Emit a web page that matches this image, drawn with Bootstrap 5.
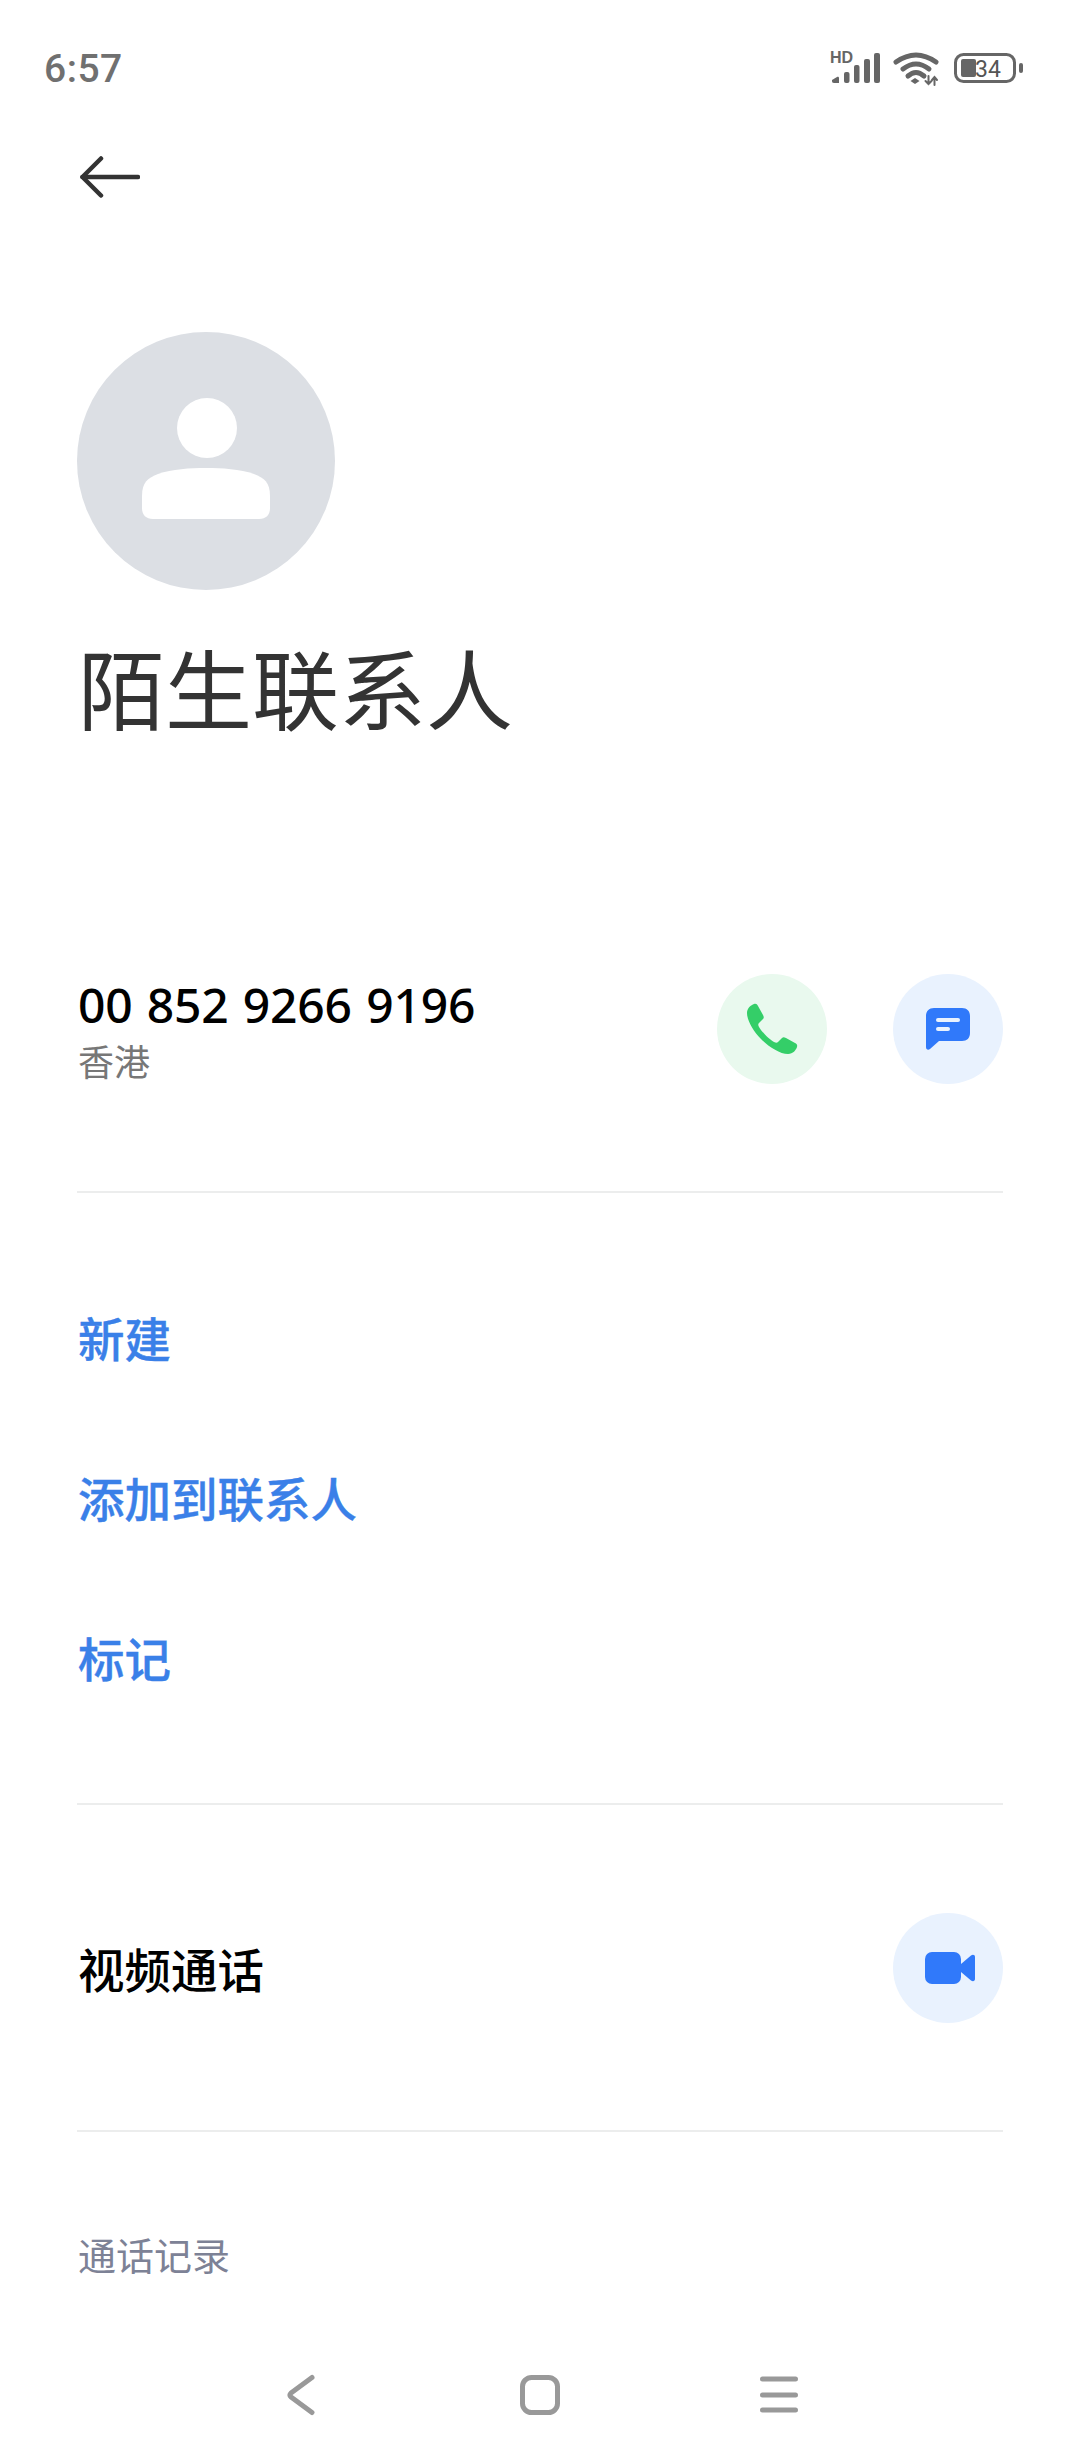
<!DOCTYPE html>
<html lang="zh-CN">

<head>
    <meta charset="UTF-8">
    <meta name="viewport" content="width=device-width, initial-scale=1.0">
    <link rel="stylesheet" href="https://cdn.jsdelivr.net/npm/bootstrap@5.3.1/dist/css/bootstrap.min.css">
    <title>陌生联系人</title>
    <style>
        body {
            width: 1080px;
            height: 2460px;
            overflow: hidden;
            background: #fff;
            font-family: "Noto Sans CJK SC", "Noto Sans", sans-serif;
        }

        svg {
            display: block;
        }

        .status-strip {
            height: 136px;
            padding: 48px 56px 0 44px;
        }

        .clock {
            margin-top: 5px;
            font-family: "Roboto", sans-serif;
            font-size: 39px;
            line-height: 32px;
            font-weight: 500;
            letter-spacing: 0.5px;
            color: #707070;
        }

        .status-icons {
            gap: 13px;
        }

        .back-row {
            height: 196px;
            padding: 20px 0 0 80px;
        }

        .avatar-disc {
            width: 258px;
            height: 258px;
            margin-left: 77px;
            padding-bottom: 6px;
            background: #dcdfe4;
        }

        .contact-title {
            margin: 46px 0 0 78px;
            font-size: 87px;
            line-height: 100px;
            font-weight: 400;
            color: #333;
        }

        .section-box {
            margin: 0 77px;
            border-bottom: 2px solid #eceded;
        }

        .number-box {
            height: 457px;
            padding: 238px 0 0 1px;
        }

        .phone-number {
            margin-top: 2px;
            font-family: "Noto Sans", sans-serif;
            font-size: 48px;
            line-height: 58px;
            font-weight: 500;
            letter-spacing: -0.2px;
            word-spacing: 2px;
            color: #000;
        }

        .phone-area {
            margin-top: 1px;
            font-size: 36px;
            line-height: 50px;
            color: #777;
        }

        .round-btn {
            width: 110px;
            height: 110px;
        }

        .round-green {
            background: #e9f9ee;
        }

        .round-blue {
            background: #e9f2fe;
        }

        .number-actions {
            gap: 66px;
        }

        .actions-box {
            height: 612px;
            padding: 92px 0 0 1px;
        }

        .action-link {
            height: 160px;
            font-size: 46.500px;
            line-height: 104px;
            font-weight: 500;
            -webkit-text-stroke: 0.4px #3a80e8;
            color: #3a80e8;
            text-decoration: none;
        }

        .video-box {
            height: 327px;
            padding-left: 1px;
        }

        .video-label {
            font-size: 46.500px;
            font-weight: 500;
            color: #000;
        }

        .video-glyph {
            margin-left: 4px;
        }

        .history-title {
            margin: 94px 0 0 78px;
            font-size: 38px;
            line-height: 56px;
            color: #7d8296;
        }

        .bottom-nav {
            height: 110px;
            padding-left: 286px;
            gap: 197px;
        }
    </style>
</head>

<body class="d-flex flex-column">
    <div class="status-strip d-flex justify-content-between align-items-start flex-shrink-0">
        <div class="clock">6:57</div>
        <div class="status-icons d-flex align-items-start">
            <svg width="50" height="38" viewBox="0 0 50 38" fill="#666">
                <text x="0" y="15" font-family="Liberation Sans, sans-serif" font-size="16" font-weight="700">HD</text>
                <path d="M2 32 L7 29 C8 28.500 9 29 9 30 V35 H4 C2.500 35 2 34 2 33 Z" />
                <rect x="14" y="24" width="5.500" height="11" rx="2" />
                <rect x="24" y="17" width="5.500" height="18" rx="2" />
                <rect x="34" y="11" width="6" height="24" rx="2" />
                <rect x="44" y="5" width="6" height="30" rx="2" />
            </svg>
            <svg width="48" height="38" viewBox="0 0 48 38" fill="none" stroke="#666" stroke-width="5" stroke-linecap="round">
                <path d="M3 14 Q23 0 43 14" />
                <path d="M10 21 Q23 11 36 21" />
                <path d="M15 28 Q23 21 31 28" />
                <path d="M17.500 33 L22 30 L26.500 33 L22 36 Z" fill="#666" stroke="none" />
                <path d="M35.500 28 V36 M32.500 33 L35.500 36 L38.500 33" stroke-width="2" />
                <path d="M41.500 37 V29 M39 32 L41.500 29 L44 32" stroke-width="2" />
            </svg>
            <svg width="70" height="38" viewBox="0 0 70 38">
                <rect x="1.500" y="6.500" width="59" height="27" rx="8" fill="none" stroke="#666" stroke-width="3" />
                <rect x="7" y="11" width="15" height="18" rx="2" fill="#666" />
                <text x="21" y="29" font-family="Roboto, sans-serif" font-size="23" fill="#555">34</text>
                <rect x="65" y="15" width="4" height="10" rx="2" fill="#666" />
            </svg>
        </div>
    </div>

    <div class="back-row flex-shrink-0">
        <svg width="60" height="42" viewBox="0 0 60 42" fill="none" stroke="#333" stroke-width="4.500" stroke-linecap="round" stroke-linejoin="round">
            <path d="M21 2.500 L2.500 21 L21 39.500" />
            <path d="M2.500 21 H58" />
        </svg>
    </div>

    <div class="avatar-disc rounded-circle d-flex align-items-center justify-content-center flex-shrink-0">
        <svg width="128" height="121" viewBox="0 0 128 121" fill="#fff">
            <circle cx="65" cy="30" r="30" />
            <path d="M0 98 C0 84 6 80 16 76 C30 71 48 70 64 70 C80 70 98 71 112 76 C122 80 128 84 128 98 V110 C128 117 124 121 117 121 H11 C4 121 0 117 0 110 Z" />
        </svg>
    </div>

    <h1 class="contact-title">陌生联系人</h1>

    <div class="section-box number-box d-flex justify-content-between align-items-start flex-shrink-0">
        <div>
            <div class="phone-number">00 852 9266 9196</div>
            <div class="phone-area">香港</div>
        </div>
        <div class="number-actions d-flex">
            <div class="round-btn round-green rounded-circle d-flex align-items-center justify-content-center">
                <svg width="52" height="52" viewBox="0 0 52 52" fill="#34ce68">
                    <path d="M8 1 C5 2 1 5 1 10 C1 17 7 28 15 36 C23 44 34 51 42 51 C47 51 50 47 51 44 C51.500 42 51 41 49 40 L40 35 C38 34 37 34 36 35 L32 39 C31 40 30 40 28 39 C24 37 15 28 13 24 C12 22 12 21 13 20 L17 16 C18 15 18 14 17 12 L12 3 C11 1 10 0.500 8 1 Z" />
                </svg>
            </div>
            <div class="round-btn round-blue rounded-circle d-flex align-items-center justify-content-center">
                <svg width="44" height="42" viewBox="0 0 44 42">
                    <path d="M8 0 H36 C41 0 44 3 44 8 V25 C44 30 41 33 36 33 H13 L4 41 C2 42.500 0 41.500 0 39 V8 C0 3 3 0 8 0 Z" fill="#3079fa" />
                    <rect x="10" y="10" width="24" height="4" rx="2" fill="#e9f2fe" />
                    <rect x="10" y="19" width="14" height="4" rx="2" fill="#e9f2fe" />
                </svg>
            </div>
        </div>
    </div>

    <div class="section-box actions-box d-flex flex-column flex-shrink-0">
        <a class="action-link" href="#">新建</a>
        <a class="action-link" href="#">添加到联系人</a>
        <a class="action-link" href="#">标记</a>
    </div>

    <div class="section-box video-box d-flex justify-content-between align-items-center flex-shrink-0">
        <div class="video-label">视频通话</div>
        <div class="round-btn round-blue rounded-circle d-flex align-items-center justify-content-center">
            <svg class="video-glyph" width="50" height="32" viewBox="0 0 50 32" fill="#3079fa">
                <rect x="0" y="0" width="36" height="32" rx="7" />
                <path d="M36 12 L46 3.500 C48 2 50 3 50 5 V27 C50 29 48 30 46 28.500 L36 20 Z" />
            </svg>
        </div>
    </div>

    <div class="history-title">通话记录</div>

    <div class="bottom-nav d-flex align-items-start mt-auto flex-shrink-0">
        <svg width="36" height="110" viewBox="0 0 36 110" fill="none" stroke="#999" stroke-width="5" stroke-linecap="round" stroke-linejoin="round">
            <path d="M26 27.500 L5 43 Q3 45 5 47 L26 62.500" />
        </svg>
        <svg width="42" height="110" viewBox="0 0 42 110" fill="none" stroke="#999" stroke-width="5">
            <rect x="3.500" y="27.500" width="35" height="35" rx="9" />
        </svg>
        <svg width="42" height="110" viewBox="0 0 42 110" fill="none" stroke="#999" stroke-width="5" stroke-linecap="round">
            <path d="M4.500 29 H37.500 M4.500 45 H37.500 M4.500 60 H37.500" />
        </svg>
    </div>
</body>

</html>
